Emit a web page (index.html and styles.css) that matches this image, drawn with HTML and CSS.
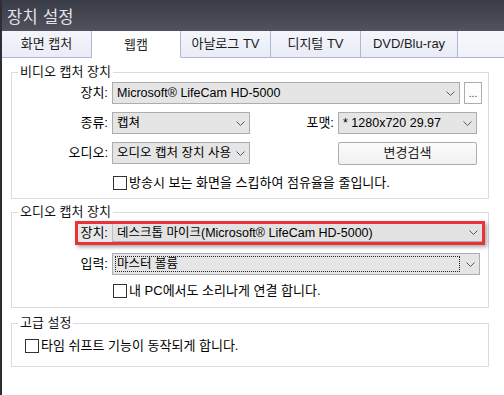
FILE: index.html
```html
<!DOCTYPE html>
<html lang="ko">
<head>
<meta charset="utf-8">
<title>장치 설정</title>
<link rel="stylesheet" href="styles.css">
</head>
<body>
<div class="window">
  <div class="titlebar">장치 설정</div>
  <div class="tabs">
    <div class="tab w90">화면 캡처</div>
    <div class="tab active w89">웹캠</div>
    <div class="tab w90">아날로그 TV</div>
    <div class="tab w90">디지털 TV</div>
    <div class="tab w97">DVD/Blu-ray</div>
    <div class="tab filler"></div>
  </div>
  <div class="content">
    <fieldset class="group g1">
      <legend>비디오 캡처 장치</legend>
      <div class="row first">
        <span class="lbl">장치:</span>
        <div class="select s348"><span class="val">Microsoft® LifeCam HD-5000</span><svg class="chev" width="9" height="5" viewBox="0 0 9 5"><polyline points="0.5,0.5 4.5,4.5 8.5,0.5"/></svg></div>
        <div class="dots">...</div>
      </div>
      <div class="row">
        <span class="lbl">종류:</span>
        <div class="select s138"><span class="val">캡쳐</span><svg class="chev" width="9" height="5" viewBox="0 0 9 5"><polyline points="0.5,0.5 4.5,4.5 8.5,0.5"/></svg></div>
        <span class="lbl2">포맷:</span>
        <div class="select s139"><span class="val">* 1280x720 29.97</span><svg class="chev" width="9" height="5" viewBox="0 0 9 5"><polyline points="0.5,0.5 4.5,4.5 8.5,0.5"/></svg></div>
      </div>
      <div class="row">
        <span class="lbl">오디오:</span>
        <div class="select s138"><span class="val">오디오 캡처 장치 사용</span><svg class="chev" width="9" height="5" viewBox="0 0 9 5"><polyline points="0.5,0.5 4.5,4.5 8.5,0.5"/></svg></div>
        <span class="spacer"></span>
        <div class="button">변경검색</div>
      </div>
      <div class="row check-row">
        <span class="box"></span><span class="ctext">방송시 보는 화면을 스킵하여 점유율을 줄입니다.</span>
      </div>
    </fieldset>

    <fieldset class="group g2">
      <legend>오디오 캡처 장치</legend>
      <div class="highlight">
        <span class="hlbl">장치:</span>
        <div class="select hsel"><span class="val">데스크톱 마이크(Microsoft® LifeCam HD-5000)</span><svg class="chev" width="9" height="5" viewBox="0 0 9 5"><polyline points="0.5,0.5 4.5,4.5 8.5,0.5"/></svg></div>
      </div>
      <div class="row r8">
        <span class="lbl">입력:</span>
        <div class="select s368"><span class="focus">마스터 볼륨</span><svg class="chev" width="9" height="5" viewBox="0 0 9 5"><polyline points="0.5,0.5 4.5,4.5 8.5,0.5"/></svg></div>
      </div>
      <div class="row check-row r5">
        <span class="box"></span><span class="ctext">내 PC에서도 소리나게 연결 합니다.</span>
      </div>
    </fieldset>

    <fieldset class="group g3">
      <legend>고급 설정</legend>
      <div class="row check-row adv">
        <span class="box"></span><span class="ctext">타임 쉬프트 기능이 동작되게 합니다.</span>
      </div>
    </fieldset>
  </div>
</div>
</body>
</html>
```

FILE: styles.css
```css
* { box-sizing: border-box; }

html, body {
  margin: 0;
  padding: 0;
  background: #ffffff;
}

body {
  font-family: "Liberation Sans", "Noto Sans CJK KR", sans-serif;
  font-size: 12.5px;
  line-height: 16px;
  color: #000;
}

.window {
  width: 504px;
  height: 395px;
  border-left: 2px solid #2c2d35;
  background: #fff;
  overflow: hidden;
}

.titlebar {
  height: 31px;
  padding-left: 5px;
  display: flex;
  align-items: center;
  background: linear-gradient(#393b46, #50525e);
  color: #e4e4e8;
  font-family: "Noto Sans CJK KR", sans-serif;
  font-size: 16.5px;
  letter-spacing: 0.3px;
}

.tabs {
  display: flex;
  height: 27px;
}

.tab {
  height: 27px;
  display: flex;
  align-items: center;
  justify-content: center;
  background: linear-gradient(#f4f5fb, #e9ecf6);
  border-right: 1px solid #aeb6d6;
  border-bottom: 1px solid #aeb6d6;
  font-size: 13px;
  color: #1c1c1c;
  padding-bottom: 1px;
}

.tab.active {
  background: #ffffff;
  border-bottom-color: #ffffff;
  padding-top: 3px;
}

.tab.filler {
  flex: 1;
  border-right: none;
  background: linear-gradient(#f7f8fc, #f0f2f9);
}

.w90 { width: 90px; }
.w89 { width: 89px; }
.w97 { width: 97px; }

.content {
  padding: 6px 0 0 9px;
}

.group {
  width: 478px;
  margin: 0;
  border: 1px solid #dcdcdc;
  padding: 2px 0 4px 0;
  min-width: 0;
}

.group legend {
  margin-left: 6px;
  padding: 0 2px;
  font-size: 13px;
  line-height: 16px;
  color: #111;
}

.g2 {
  margin-top: 5px;
  padding: 1px 0 5px 0;
}

.g3 {
  margin-top: 7px;
  padding: 4px 0 9px 0;
}

.row {
  display: flex;
  align-items: center;
  height: 22px;
  margin-top: 8px;
}

.row.first { margin-top: 0; }
.row.r8 { margin-top: 8px; }
.row.r5 { margin-top: 5px; }

.lbl {
  width: 96px;
  margin-right: 4px;
  text-align: right;
  font-size: 13px;
}

.lbl2 {
  width: 84px;
  margin-right: 4px;
  text-align: right;
  font-size: 13px;
}

.spacer { width: 88px; }

.select {
  height: 22px;
  border: 1px solid #adadad;
  background: #e5e5e5;
  display: flex;
  align-items: center;
  padding-left: 4px;
  white-space: nowrap;
  overflow: hidden;
}

.select .val {
  flex: 1;
  overflow: hidden;
}

.chev {
  flex: none;
  margin-left: auto;
  margin-right: 4px;
  fill: none;
  stroke: #5a5a5a;
  stroke-width: 1;
}

.s348 { width: 348px; }
.s138 { width: 138px; }
.s139 { width: 139px; }
.s368 { width: 368px; padding-left: 2px; }

.dots {
  width: 18px;
  height: 22px;
  margin-left: 4px;
  border: 1px solid #adadad;
  background: #fdfdfd;
  font-size: 10px;
  line-height: 10px;
  display: flex;
  align-items: flex-end;
  justify-content: center;
  padding-bottom: 4px;
  color: #333;
}

.button {
  width: 139px;
  height: 23px;
  border: 1px solid #adadad;
  border-radius: 2px;
  background: linear-gradient(#fbfbfb, #f1f1f1);
  display: flex;
  align-items: center;
  justify-content: center;
  font-size: 13px;
  color: #222;
}

.check-row {
  padding-left: 101px;
}

.check-row.adv {
  margin-top: 0;
  padding-left: 13px;
}

.box {
  width: 14px;
  height: 14px;
  border: 1px solid #333;
  background: #fff;
  margin-right: 2px;
  flex: none;
}

.ctext {
  font-size: 13px;
  white-space: nowrap;
}

.highlight {
  display: flex;
  align-items: center;
  width: 410px;
  margin-left: 63px;
  border: 3px solid #e8333b;
  background: #e8e8e8;
  box-shadow: 2px 2px 4px rgba(0, 0, 0, 0.35);
}

.hlbl {
  width: 30px;
  margin-right: 4px;
  text-align: right;
  font-size: 13px;
}

.hsel {
  flex: 1;
  height: 18px;
  border-top: none;
  border-right: none;
  border-left: 1px solid #c0c0c0;
  border-bottom: 1px solid #adadad;
  background: #e2e2e2;
}

.focus {
  width: 345px;
  height: 16px;
  border: 1px dotted #222;
  padding-left: 1px;
  line-height: 14px;
  flex: none;
}
```
